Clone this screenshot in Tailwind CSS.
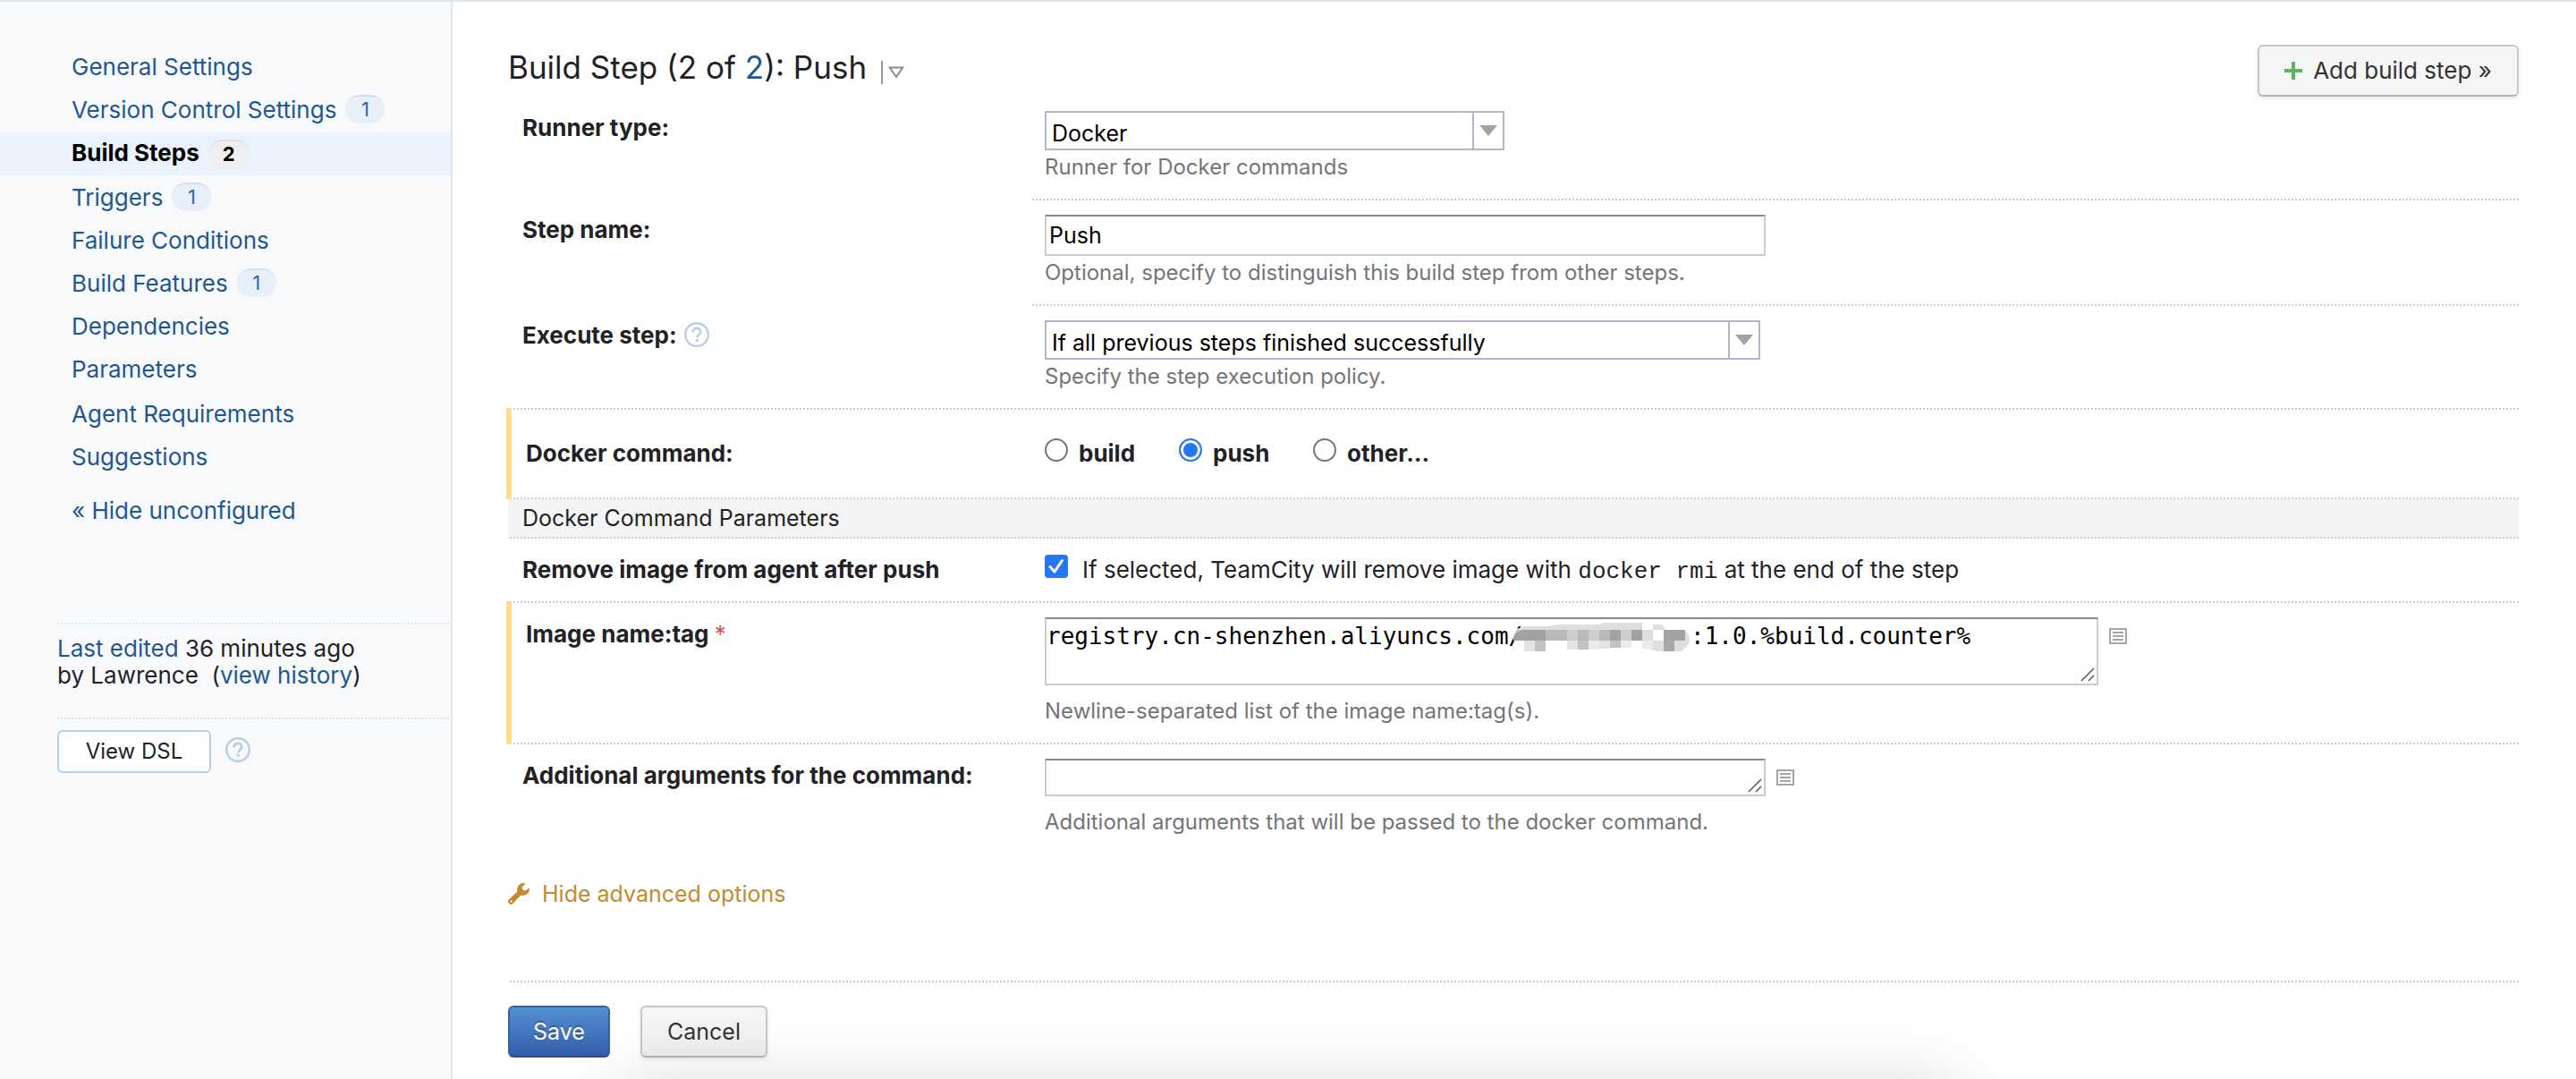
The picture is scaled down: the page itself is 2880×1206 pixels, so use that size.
<!DOCTYPE html>
<html lang="en">
<head>
<meta charset="utf-8">
<title>Build Step: Push</title>
<script src="https://cdn.jsdelivr.net/npm/@tailwindcss/browser@4"></script>
</head>
<body class="bg-white font-[Inter,sans-serif] text-[26px] leading-[34px] text-[#1f2326]">
<svg class="hidden">
  <symbol id="help" viewBox="0 0 28 28">
    <circle cx="14" cy="14" r="12.8" fill="none" stroke="#b8cfe5" stroke-width="2.4"/>
    <path d="M9.6 11.2c0-2.7 1.9-4.3 4.4-4.3s4.3 1.6 4.3 3.9c0 1.7-.9 2.6-2.2 3.6-1.200.9-1.700 1.500-1.700 2.900" fill="none" stroke="#b8cfe5" stroke-width="2.6"/>
    <path d="M12.700 18.800h3v3h-3z" fill="#b8cfe5"/>
  </symbol>
  <symbol id="list" viewBox="0 0 20 18">
    <path d="M1 1h18v16H1z" fill="none" stroke="#a6a6a6" stroke-width="2"/>
    <path d="M4 5h12M4 9h12M4 13h12" stroke="#a6a6a6" stroke-width="2"/>
  </symbol>
  <symbol id="grip" viewBox="0 0 16 16">
    <path d="M1 15L15 1M9 15l6-6" stroke="#555" stroke-width="1.500"/>
  </symbol>
</svg>

<div class="flex min-h-screen items-stretch border-t-2 border-[#dfe5eb]">
  <aside class="w-[506px] shrink-0 border-r-2 border-[#dfe5eb] bg-[#f7f9fb] pt-[50px] text-[#1f5795]">
    <nav class="flex flex-col gap-0.5 leading-[46px]">
      <ul>
        <li class="h-12 pl-20"><a href="#">General Settings</a></li>
        <li class="flex h-12 gap-2.5 pl-20"><a href="#">Version Control Settings</a><span class="mt-1.5 h-8 w-11 rounded-2xl border-t-2 border-[#d3dff0] bg-[#e7eff8] text-center text-[22px] leading-[28px] text-[#2b66c0]">1</span></li>
        <li class="flex h-12 gap-2.5 bg-[#eaf3fd] pl-20 font-bold text-black"><a href="#">Build Steps</a><span class="mt-2 h-8 w-[46px] rounded-2xl border-t-2 border-[#dcdcdc] bg-[#efefef] text-center text-[22px] leading-[29px]">2</span></li>
      </ul>
      <ul>
        <li class="flex h-12 gap-2.5 pl-20"><a href="#">Triggers</a><span class="mt-1.5 h-8 w-11 rounded-2xl border-t-2 border-[#d3dff0] bg-[#e7eff8] text-center text-[22px] leading-[28px] text-[#2b66c0]">1</span></li>
        <li class="h-12 pl-20"><a href="#">Failure Conditions</a></li>
        <li class="flex h-12 gap-2.5 pl-20"><a href="#">Build Features</a><span class="mt-1.5 h-8 w-11 rounded-2xl border-t-2 border-[#d3dff0] bg-[#e7eff8] text-center text-[22px] leading-[28px] text-[#2b66c0]">1</span></li>
        <li class="h-12 pl-20"><a href="#">Dependencies</a></li>
        <li class="h-12 pl-20"><a href="#">Parameters</a></li>
      </ul>
      <ul>
        <li class="h-12 pl-20"><a href="#">Agent Requirements</a></li>
        <li class="h-12 pl-20"><a href="#">Suggestions</a></li>
      </ul>
    </nav>
    <a href="#" class="mt-3 block h-12 pl-20 leading-[46px]">« Hide unconfigured</a>
    <div class="mt-[100px] ml-16">
      <div class="h-0.5 bg-[linear-gradient(90deg,#e1e5e9_50%,transparent_50%)] bg-[length:4px_2px]"></div>
      <p class="pt-3 pb-8 leading-[30px] text-[#1f2326]"><a href="#" class="text-[#1f5795]">Last edited</a> 36 minutes ago<br>by Lawrence&nbsp; (<a href="#" class="text-[#1f5795]">view history</a>)</p>
      <div class="h-0.5 bg-[linear-gradient(90deg,#e1e5e9_50%,transparent_50%)] bg-[length:4px_2px]"></div>
      <div class="mt-3 flex gap-4">
        <button type="button" class="h-12 w-[172px] rounded-md border-2 border-[#b8cfe5] bg-white text-[24px] text-[#1f2326]">View DSL</button>
        <a href="#" aria-label="Help" class="mt-2"><svg class="size-7"><use href="#help"/></svg></a>
      </div>
    </div>
  </aside>

  <main class="min-w-0 grow pt-12 pr-16 pl-[62px]">
    <header class="flex items-start justify-between">
      <h1 class="flex text-[35px] leading-[50px]"><span>Build Step (2 of <a href="#" class="text-[#1f5795]">2</a>): Push</span>
        <button type="button" aria-label="Step menu" class="mt-[18px] ml-4 flex h-[26px] items-center border-l-2 border-[#999] pl-1.5">
          <svg class="h-3.5 w-[18px]" viewBox="0 0 18 14"><path d="M1.800 1.500h14.400L9 12z" fill="none" stroke="#8c8c8c" stroke-width="2"/></svg>
        </button>
      </h1>
      <button type="button" class="flex h-[58px] w-[292px] items-center justify-center gap-3 rounded-md border-2 border-[#c8c8c8] border-b-[#b5b5b5] bg-[#f5f5f5] text-[#333] shadow-[0_2px_4px_rgba(0,0,0,0.1)]">
        <svg class="size-5" viewBox="0 0 20 20"><path d="M10 0v20M0 10h20" stroke="#5fb265" stroke-width="4"/></svg>Add build step »
      </button>
    </header>

    <form>
      <div class="flex">
        <label for="runner" class="w-[584px] shrink-0 pt-[18px] pl-4 font-bold">Runner type:</label>
        <div class="grow bg-[linear-gradient(90deg,#ccc_50%,transparent_50%)] bg-[length:4px_2px] bg-bottom bg-repeat-x pt-4 pb-[18px] pl-4">
          <div class="relative w-[514px]">
            <select id="runner" class="block h-11 w-full appearance-none border-2 border-[#b5b5c9] bg-white pt-1.5 pl-1.5 text-[25px] leading-[34px] text-black"><option>Docker</option></select>
            <span class="pointer-events-none absolute inset-y-0 right-0 flex w-9 items-center justify-center border-2 border-[#b5b5c9]"><svg class="h-3 w-5" viewBox="0 0 20 12"><path d="M0 0h20L10 12z" fill="#a3a3a3"/></svg></span>
          </div>
          <p class="text-[24px] leading-[38px] text-[#737577]">Runner for Docker commands</p>
        </div>
      </div>

      <div class="flex">
        <label for="name" class="w-[584px] shrink-0 pt-4 pl-4 font-bold">Step name:</label>
        <div class="grow bg-[linear-gradient(90deg,#ccc_50%,transparent_50%)] bg-[length:4px_2px] bg-bottom bg-repeat-x pt-4 pb-[18px] pl-4">
          <input id="name" type="text" value="Push" class="block h-[46px] w-[806px] border-2 border-[#ccc] border-t-[#888] bg-white px-[3px] text-[25px] text-black">
          <p class="text-[24px] leading-[38px] text-[#737577]">Optional, specify to distinguish this build step from other steps.</p>
        </div>
      </div>

      <div class="flex bg-[linear-gradient(90deg,#ccc_50%,transparent_50%)] bg-[length:4px_2px] bg-bottom bg-repeat-x">
        <div class="flex w-[584px] shrink-0 gap-2 pt-4 pl-4 font-bold"><label for="policy">Execute step:</label><a href="#" aria-label="Help" class="mt-0.5"><svg class="size-7"><use href="#help"/></svg></a></div>
        <div class="grow pt-4 pb-[18px] pl-4">
          <div class="relative w-[800px]">
            <select id="policy" class="block h-11 w-full appearance-none border-2 border-[#b5b5c9] bg-white pt-1.5 pl-1.5 text-[25px] leading-[34px] text-black"><option>If all previous steps finished successfully</option></select>
            <span class="pointer-events-none absolute inset-y-0 right-0 flex w-9 items-center justify-center border-2 border-[#b5b5c9]"><svg class="h-3 w-5" viewBox="0 0 20 12"><path d="M0 0h20L10 12z" fill="#a3a3a3"/></svg></span>
          </div>
          <p class="text-[24px] leading-[38px] text-[#737577]">Specify the step execution policy.</p>
        </div>
      </div>

      <div role="radiogroup" aria-labelledby="command" class="flex bg-[linear-gradient(90deg,#ccc_50%,transparent_50%)] bg-[length:4px_2px] bg-bottom bg-repeat-x font-bold">
        <div id="command" class="-mt-0.5 -ml-0.5 w-[586px] shrink-0 border-l-6 border-[#fbdf8c] pt-[34px] pl-4">Docker command:</div>
        <div class="flex grow pt-8 pb-[34px] pl-4">
          <label class="flex w-[150px] gap-3"><input type="radio" name="cmd" class="size-[26px] appearance-none rounded-full border-2 border-[#767676] bg-white">build</label>
          <label class="flex w-[150px] gap-3"><input type="radio" name="cmd" checked class="size-[26px] appearance-none rounded-full border-2 border-[#2777f5] bg-[#2777f5] shadow-[inset_0_0_0_3px_#fff]">push</label>
          <label class="flex gap-3"><input type="radio" name="cmd" class="size-[26px] appearance-none rounded-full border-2 border-[#767676] bg-white">other...</label>
        </div>
      </div>

      <h2 class="bg-[linear-gradient(90deg,#ccc_50%,transparent_50%)] bg-[#f4f4f4] bg-[length:4px_2px] bg-bottom bg-repeat-x pb-0.5 pl-4 text-[25px] leading-[42px]">Docker Command Parameters</h2>

      <div class="flex bg-[linear-gradient(90deg,#ccc_50%,transparent_50%)] bg-[length:4px_2px] bg-bottom bg-repeat-x">
        <label for="rmi" class="w-[584px] shrink-0 pt-[18px] pl-4 font-bold">Remove image from agent after push</label>
        <div class="flex grow gap-4 pt-[18px] pb-5 pl-4">
          <span class="relative size-[26px]"><input id="rmi" type="checkbox" checked class="block size-[26px] appearance-none rounded bg-[#2777f5]"><svg class="pointer-events-none absolute inset-0 size-[26px]" viewBox="0 0 26 26"><path d="M6 13.500l5 5.500L19.500 6.500" fill="none" stroke="#fff" stroke-width="3" stroke-linecap="round" stroke-linejoin="round"/></svg></span>
          <p>If selected, TeamCity will remove image with <code class="font-['Liberation_Mono',monospace] text-[26px] leading-6">docker rmi</code> at the end of the step</p>
        </div>
      </div>

      <div class="flex bg-[linear-gradient(90deg,#ccc_50%,transparent_50%)] bg-[length:4px_2px] bg-bottom bg-repeat-x">
        <label for="image" class="-mt-0.5 -ml-0.5 w-[586px] shrink-0 border-l-6 border-[#fbdf8c] pt-5 pl-4 font-bold">Image name:tag <span class="font-normal text-[#d0555b]">*</span></label>
        <div class="grow pt-4 pb-[18px] pl-4">
          <div class="mb-2.5 flex gap-3">
            <div class="relative">
              <textarea id="image" class="block h-[76px] w-[1178px] resize-none overflow-hidden border-2 border-[#ccc] border-t-[#888] bg-white pt-1 font-['DejaVu_Sans_Mono',monospace] text-[26px] leading-[30px] whitespace-pre text-black">registry.cn-shenzhen.aliyuncs.com/            :1.0.%build.counter%</textarea>
              <svg class="pointer-events-none absolute top-1.5 left-[522px] h-8 w-[200px]" viewBox="0 0 200 32">
                <path d="M2 20C2 8 8 4 18 4H40L52 2H98L104 0H146V8H158V2H168L172 8H190C199 10 202 20 196 26L190 32H162L150 28V20Z" fill="#dedede"/>
                <path d="M2 20C2 12 6 8 14 8h24v12H2zM110 8h12v12h-12zM134 8h12v12h-12zM170 8h24v12h-24z" fill="#a2a2a2"/>
                <path d="M38 8h12v12H38zM50 8h12v12H50zM74 8h24v12H74zM98 8h12v12H98z" fill="#b9b9b9"/>
                <path d="M62 8h12v12H62zM86 8h12v12H86zM122 8h12v12h-12z" fill="#cdcdcd"/>
                <path d="M158 8h12v12h-12z" fill="#fff"/>
                <path d="M14 20h12v12H14zM62 20h12v10H62zM98 20h12v9H98z" fill="#e3e3e3"/>
                <path d="M26 20h12v12H26zM74 20h12v10H74zM110 20h12v8h-12z" fill="#c2c2c2"/>
                <path d="M86 20h12v10H86zM122 20h12v8h-12zM146 20h12v9h-12z" fill="#ebebeb"/>
                <path d="M170 20h12v12h-12z" fill="#a8a8a8"/>
              </svg>
              <svg class="pointer-events-none absolute right-1 bottom-1 size-4"><use href="#grip"/></svg>
            </div>
            <a href="#" aria-label="Insert parameter" class="mt-3 h-[18px]"><svg class="h-[18px] w-5"><use href="#list"/></svg></a>
          </div>
          <p class="text-[24px] leading-[38px] text-[#737577]">Newline-separated list of the image name:tag(s).</p>
        </div>
      </div>

      <div class="flex">
        <label for="args" class="w-[584px] shrink-0 pt-[18px] pl-4 font-bold">Additional arguments for the command:</label>
        <div class="grow pt-4 pb-[18px] pl-4">
          <div class="mb-2.5 flex gap-3">
            <div class="relative">
              <textarea id="args" class="block h-[42px] w-[806px] resize-none overflow-hidden border-2 border-[#ccc] border-t-[#888] bg-white font-['DejaVu_Sans_Mono',monospace] text-[26px] text-black"></textarea>
              <svg class="pointer-events-none absolute right-1 bottom-1 size-4"><use href="#grip"/></svg>
            </div>
            <a href="#" aria-label="Insert parameter" class="mt-3 h-[18px]"><svg class="h-[18px] w-5"><use href="#list"/></svg></a>
          </div>
          <p class="text-[24px] leading-[38px] text-[#737577]">Additional arguments that will be passed to the docker command.</p>
        </div>
      </div>

      <a href="#" class="mt-7 flex w-fit items-center gap-3.5 text-[25px] leading-[30px] text-[#c48a2d]">
        <svg class="size-6" viewBox="0 0 24 24"><path d="M23.600 5.200a7 7 0 0 1-9.300 8.200L5.600 22.800a3.200 3.200 0 0 1-4.600-4.500l9.500-8.800A7 7 0 0 1 19.500.6l-4 3.900.9 3.200 3.300.8z" fill="#c48a2d"/><circle cx="3.600" cy="20.400" r="1.100" fill="#fff"/></svg>Hide advanced options</a>

      <div class="mt-[82px] flex gap-[34px] bg-[linear-gradient(90deg,#ccc_50%,transparent_50%)] bg-[length:4px_2px] bg-top bg-repeat-x pt-7">
        <button type="button" class="h-[58px] w-[114px] rounded-md border-2 border-[#3560a8] border-b-[#2b4b8a] bg-linear-to-b from-[#5390d3] to-[#365dab] text-[25px] text-white text-shadow-[0_-2px_0_rgba(0,0,0,0.25)]">Save</button>
        <button type="button" class="h-[58px] w-[142px] rounded-md border-2 border-[#c8c8c8] border-b-[#b5b5b5] bg-linear-to-b from-[#f6f6f6] to-[#eeeeee] text-[25px] text-[#333] shadow-[0_2px_4px_rgba(0,0,0,0.1)]">Cancel</button>
      </div>
    </form>
  </main>
</div>
<div class="pointer-events-none fixed top-full right-[24%] left-[24%] mt-2.5 h-20 shadow-[0_0_80px_rgba(0,0,0,0.17)]"></div>
</body>
</html>
